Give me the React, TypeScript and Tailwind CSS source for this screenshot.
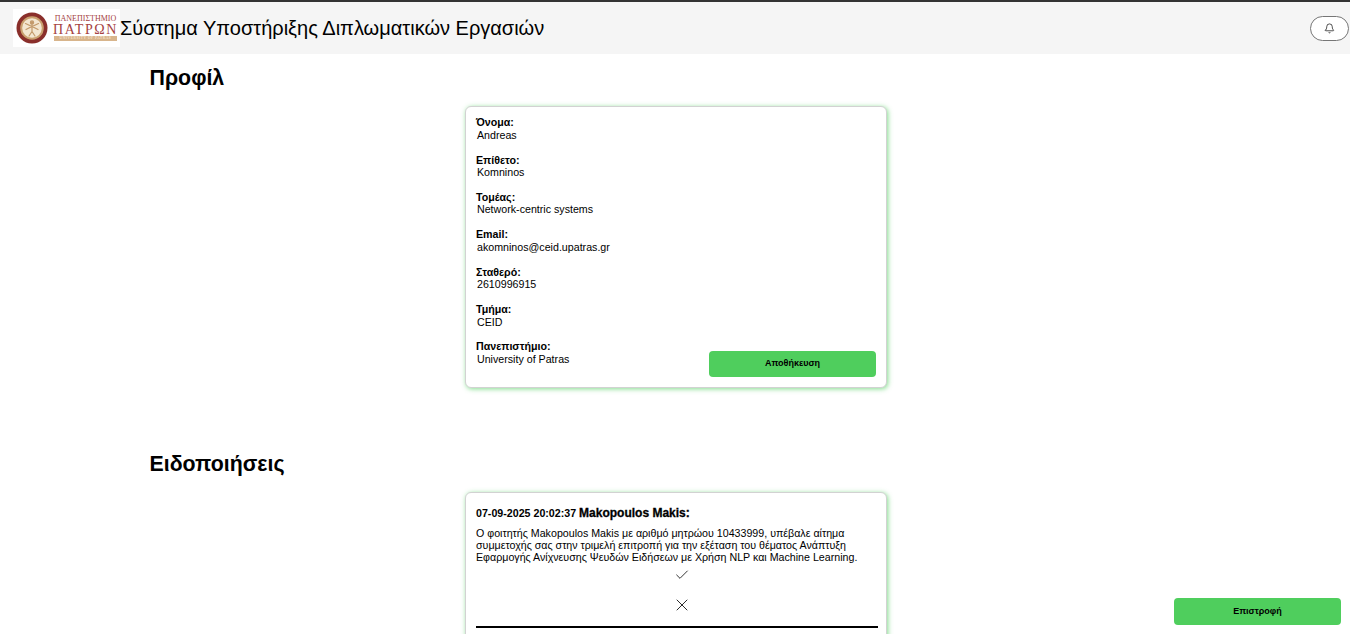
import { Bell, Check, X } from "lucide-react";

const fields = [
  ["Όνομα:", "Andreas"],
  ["Επίθετο:", "Komninos"],
  ["Τομέας:", "Network-centric systems"],
  ["Email:", "akomninos@ceid.upatras.gr"],
  ["Σταθερό:", "2610996915"],
  ["Τμήμα:", "CEID"],
  ["Πανεπιστήμιο:", "University of Patras"],
];

function Logo() {
  return (
    <div className="flex h-[38px] w-[107px] shrink-0 items-center bg-white pl-[3px]">
      <svg width="32" height="32" viewBox="0 0 32 32" className="shrink-0">
        <circle cx="16" cy="16" r="15.5" fill="#8a2f2b" />
        <circle cx="16" cy="16" r="11.8" fill="#c9a06f" />
        <circle cx="16" cy="16" r="9.8" fill="#f3e6d0" />
        <g stroke="#c39a6b" strokeWidth="1.2" fill="none" strokeLinecap="round">
          <circle cx="16" cy="10.5" r="1.6" fill="#c39a6b" />
          <path d="M16 12.5v7M16 19.5l-3 4.5M16 19.5l3 4.5M9.5 11.5l6.5 3 6.5-3M10 17.5l6-3 6 3" />
        </g>
      </svg>
      <div className="ml-[6px] flex w-[63px] flex-col items-center font-['Liberation_Serif',serif] text-[#a5423f]">
        <span className="text-[8px] leading-[8px] whitespace-nowrap">ΠΑΝΕΠΙΣΤΗΜΙΟ</span>
        <span className="mt-[1px] text-[14px] leading-[11px] tracking-[1.6px] whitespace-nowrap">ΠΑΤΡΩΝ</span>
        <span className="mt-[1px] w-full overflow-hidden bg-[#d8b58c] text-center text-[3.5px] leading-[5px] tracking-[0.6px] whitespace-nowrap text-[#fff4e4]">UNIVERSITY OF PATRAS</span>
      </div>
    </div>
  );
}

export default function App() {
  return (
    <div className="relative h-[634px] overflow-hidden bg-white font-['Liberation_Sans',Arial,sans-serif] text-black">
      <header className="flex h-[54px] items-center justify-between border-t-2 border-[#333333] bg-[#f5f5f5] pr-[1px] pl-[13px]">
        <div className="flex items-center">
          <Logo />
          <h1 className="text-[20px] leading-none font-normal whitespace-nowrap">Σύστημα Υποστήριξης Διπλωματικών Εργασιών</h1>
        </div>
        <button className="flex h-[25px] w-[39px] items-center justify-center rounded-full border border-[#767676] bg-white">
          <Bell size={11} strokeWidth={1.5} />
        </button>
      </header>

      <main className="pl-[149.5px]">
        <h2 className="mt-[12px] text-[21.33px] leading-[25px] font-bold">Προφίλ</h2>
        <section className="relative mt-[15px] ml-[315.5px] h-[282px] w-[422px] rounded-[6px] border border-[#d2d2d2] bg-white pt-[9.3px] pr-[8px] pl-[10px] shadow-[1px_1px_5px_rgba(79,206,93,0.7)]">
          {fields.map(([label, value]) => (
            <div key={label} className="mb-[12.35px] h-[25px] text-[10.67px] leading-[12.5px]">
              <div className="font-bold">{label}</div>
              <div className="pl-[1px]">{value}</div>
            </div>
          ))}
          <button className="absolute right-[10px] bottom-[10px] h-[26px] w-[167px] rounded-[4px] bg-[#4fce5d] text-[9px] font-bold">Αποθήκευση</button>
        </section>

        <h2 className="mt-[64px] text-[21.33px] leading-[25px] font-bold">Ειδοποιήσεις</h2>
        <section className="mt-[15px] ml-[315.5px] w-[422px] rounded-[6px] border border-[#d2d2d2] bg-white pt-[14px] pr-[8px] pb-[20px] pl-[10px] shadow-[1px_1px_5px_rgba(79,206,93,0.7)]">
          <p className="text-[10.67px] leading-[13px] font-bold">
            07-09-2025 20:02:37 <span className="text-[12px] font-black [-webkit-text-stroke:0.3px_black]">Makopoulos Makis:</span>
          </p>
          <p className="mt-[7px] text-[10.67px] leading-[12px]">
            Ο φοιτητής Makopoulos Makis με αριθμό μητρώου 10433999, υπέβαλε αίτημα συμμετοχής σας στην τριμελή επιτροπή για την εξέταση του θέματος Ανάπτυξη Εφαρμογής Ανίχνευσης Ψευδών Ειδήσεων με Χρήση NLP και Machine Learning.
          </p>
          <div className="mt-[4px] flex flex-col items-center pl-[10px]">
            <Check size={16} strokeWidth={1.2} />
            <X size={20} strokeWidth={1} className="mt-[12px]" />
          </div>
          <div className="mt-[11px] h-[2px] bg-black" />
        </section>
      </main>

      <button className="absolute right-[9px] bottom-[9px] h-[27px] w-[167px] rounded-[4px] bg-[#4fce5d] text-[9px] font-bold">Επιστροφή</button>
    </div>
  );
}
